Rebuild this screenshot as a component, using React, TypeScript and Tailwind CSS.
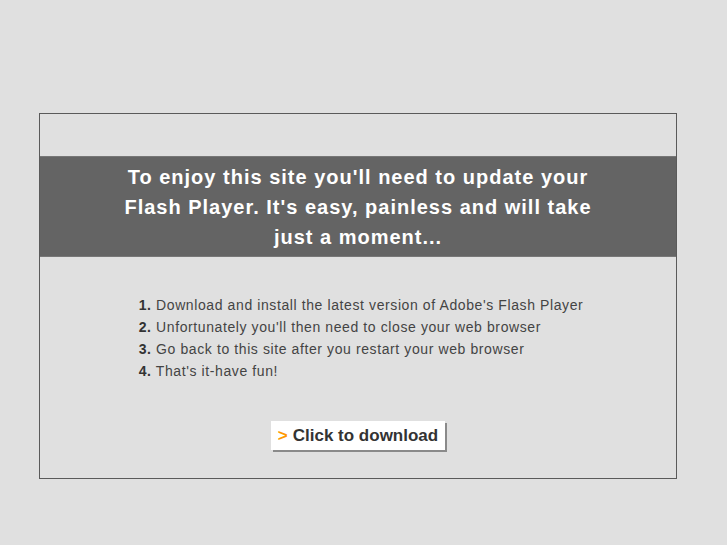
export default function App() {
  const steps = [
    "Download and install the latest version of Adobe's Flash Player",
    "Unfortunately you'll then need to close your web browser",
    'Go back to this site after you restart your web browser',
    "That's it-have fun!",
  ]

  return (
    <div
      className="min-h-[545px] w-full bg-[#e0e0e0] pt-[113px]"
      style={{ fontFamily: '"Liberation Sans", Arial, sans-serif' }}
    >
      <div className="ml-[39px] w-[638px] h-[366px] border border-[#5a5a5a] pt-[42px]">
        {/* banner */}
        <div className="bg-[#646464] border-y border-[#777777] py-[5px] h-[101px]">
          <p className="mx-auto w-[475px] text-center text-[20px] leading-[30px] font-bold tracking-[1px] text-white">
            To enjoy this site you'll need to update your Flash Player. It's easy, painless and will take
            just a moment...
          </p>
        </div>

        <div className="flex justify-center mt-[37px] pl-[6px]">
          <ol className="text-[14px] leading-[22px] tracking-[0.6px] text-[#444444]">
            {steps.map((s, i) => (
              <li key={i}>
                <span className="font-bold text-[#333333]">{i + 1}.</span> {s}
              </li>
            ))}
          </ol>
        </div>

        <div className="flex justify-center mt-[39px]">
          <button className="h-[29px] px-[7px] bg-white text-[17px] font-bold text-[#333333] shadow-[2px_2px_0_#8a8a8a] flex items-center gap-[5px]">
            <span className="text-[#ff9900]">&gt;</span>
            <span>Click to download</span>
          </button>
        </div>
      </div>
    </div>
  )
}
